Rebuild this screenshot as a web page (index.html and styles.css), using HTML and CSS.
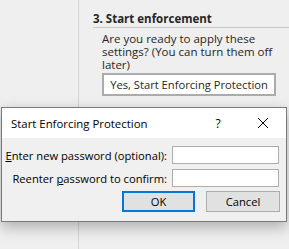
FILE: index.html
```html
<!DOCTYPE html>
<html lang="en">
<head>
    <meta charset="UTF-8">
    <title>Start Enforcing Protection</title>
    <link rel="stylesheet" href="styles.css">
</head>
<body>
    <div class="page">
        <div class="left-pane"></div>
        <div class="task-pane">
            <h2 class="step-title">3. Start enforcement</h2>
            <p class="step-text">Are you ready to apply these settings? (You can turn them off later)</p>
            <button class="enforce-btn">Yes, Start Enforcing Protection</button>
        </div>
    </div>

    <div class="dialog">
        <div class="dialog-title">
            <span class="title-text">Start Enforcing Protection</span>
            <span class="title-help">?</span>
            <svg class="title-close" width="12" height="12" viewBox="0 0 12 12">
                <path d="M1 1 L11 11 M11 1 L1 11" stroke="#000" stroke-width="1" fill="none"/>
            </svg>
        </div>
        <div class="dialog-body">
            <div class="field-grid">
                <label for="pw1"><u>E</u>nter new password (optional):</label>
                <input type="password" id="pw1">
                <label for="pw2">Reenter <u>p</u>assword to confirm:</label>
                <input type="password" id="pw2">
            </div>
            <div class="dialog-buttons">
                <button class="btn btn-default">OK</button>
                <button class="btn">Cancel</button>
            </div>
        </div>
    </div>
</body>
</html>
```

FILE: styles.css
```css
body {
    margin: 0;
    width: 289px;
    height: 249px;
    background-color: #efefef;
    font-family: "Open Sans", "Noto Sans", sans-serif;
    font-size: 11.2px;
    color: #000;
    overflow: hidden;
    position: relative;
}
.page {
    display: flex;
    height: 249px;
}
.left-pane {
    width: 78px;
    border-right: 1px solid #d5d5d5;
}
.task-pane {
    flex: 1;
    padding: 11px 0 0 14px;
}
.step-title {
    margin: 0;
    font-size: 11.5px;
    font-weight: bold;
    line-height: 16px;
    color: #262626;
    border-bottom: 1px solid #c6c6c6;
}
.step-text {
    margin: 4px 0 0 9px;
    width: 176px;
    font-size: 11.5px;
    line-height: 13px;
    color: #262626;
}
.enforce-btn {
    margin: 2px 0 0 9px;
    width: 174px;
    height: 23px;
    padding: 0;
    background: #fff;
    border: 2px solid #ababab;
    font-family: inherit;
    font-size: 11.2px;
    color: #262626;
}
.dialog {
    position: absolute;
    left: 1px;
    top: 107px;
    width: 284px;
    height: 113px;
    border: 1px solid #7a7a7a;
    background: #f0f0f0;
    box-shadow: 0 5px 14px rgba(0,0,0,0.28);
}
.dialog-title {
    display: flex;
    align-items: center;
    height: 30px;
    background: #fff;
    padding-left: 9px;
}
.title-text {
    flex: 1;
    font-size: 11.4px;
}
.title-help {
    width: 46px;
    text-align: center;
    font-size: 12px;
}
.title-close {
    margin: 0 17px 0 16px;
}
.dialog-body {
    padding: 8px 6px 0 0;
}
.field-grid {
    display: grid;
    grid-template-columns: 165px 107px;
    column-gap: 5px;
    row-gap: 5px;
    align-items: center;
}
.field-grid label {
    text-align: right;
    white-space: nowrap;
}
.field-grid input {
    height: 18px;
    box-sizing: border-box;
    margin: 0;
    border: 1px solid #adadad;
    background: #fff;
}
.dialog-buttons {
    display: flex;
    justify-content: flex-end;
    gap: 11px;
    margin-top: 4px;
}
.btn {
    width: 74px;
    height: 21px;
    box-sizing: border-box;
    background: #e1e1e1;
    border: 1px solid #adadad;
    font-family: inherit;
    font-size: 11.2px;
    padding: 0;
}
.btn-default {
    width: 73px;
    border: 2px solid #0078d7;
}
```
